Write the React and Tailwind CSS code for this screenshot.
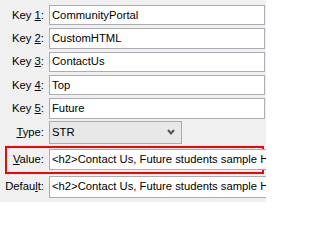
import React from 'react';

const font = { fontFamily: '"Liberation Sans", Arial, sans-serif' };

function Label({ children, className = 'w-[44px]' }) {
  return <div className={`${className} shrink-0 text-right text-[11.25px] text-black leading-none`}>{children}</div>;
}

function Field({ value, className = '' }) {
  return (
    <div className={`flex-1 min-w-0 h-[20.33px] border border-[#abadb3] bg-white flex items-center pl-[2px] overflow-hidden whitespace-nowrap text-[11.25px] text-black ${className}`}>
      {value}
    </div>
  );
}

const keys = ['CommunityPortal', 'CustomHTML', 'ContactUs', 'Top', 'Future'];

export default function App() {
  const html = '<h2>Contact Us, Future students sample HTML</h2>';
  return (
    <div style={font} className="w-[266px] h-[202px] overflow-hidden bg-[#f0f0f0] pt-[5px] flex flex-col">
      <div className="flex flex-col gap-[3px]">
        {keys.map((k, i) => (
          <div key={k} className="flex items-center">
            <Label>
              Key <span className="underline">{i + 1}</span>:
            </Label>
            <div className="ml-[5px] mr-[1px] flex-1 flex">
              <Field value={k} />
            </div>
          </div>
        ))}
      </div>

      {/* Type */}
      <div className="flex items-center mt-[2px]">
        <Label>
          <span className="underline">T</span>ype:
        </Label>
        <div className="ml-[5px] w-[133px] h-[23px] border border-[#acacac] bg-[#e8e8e8] flex items-center justify-between pl-[2px] pr-[6px] text-[11.25px] text-black">
          STR
          <svg width="8" height="6" viewBox="0 0 8 6">
            <polyline points="1,1 4,4.5 7,1" fill="none" stroke="#555" strokeWidth="2" />
          </svg>
        </div>
      </div>

      {/* Value, highlighted */}
      <div className="ml-[5px] mr-[2px] mt-[2px] h-[28px] border-2 border-[#ff0000] flex items-center">
        <Label className="w-[37px]">
          <span className="underline">V</span>alue:
        </Label>
        <div className="ml-[5px] mr-[1px] flex-1 flex">
          <Field value={html} />
        </div>
      </div>

      {/* Default */}
      <div className="flex items-center mt-[2px]">
        <Label>
          Defau<span className="underline">l</span>t:
        </Label>
        <div className="ml-[5px] mr-[1px] flex-1 flex">
          <Field value={html} className="h-[22px] bg-[#f0f0f0]" />
        </div>
      </div>
    </div>
  );
}
